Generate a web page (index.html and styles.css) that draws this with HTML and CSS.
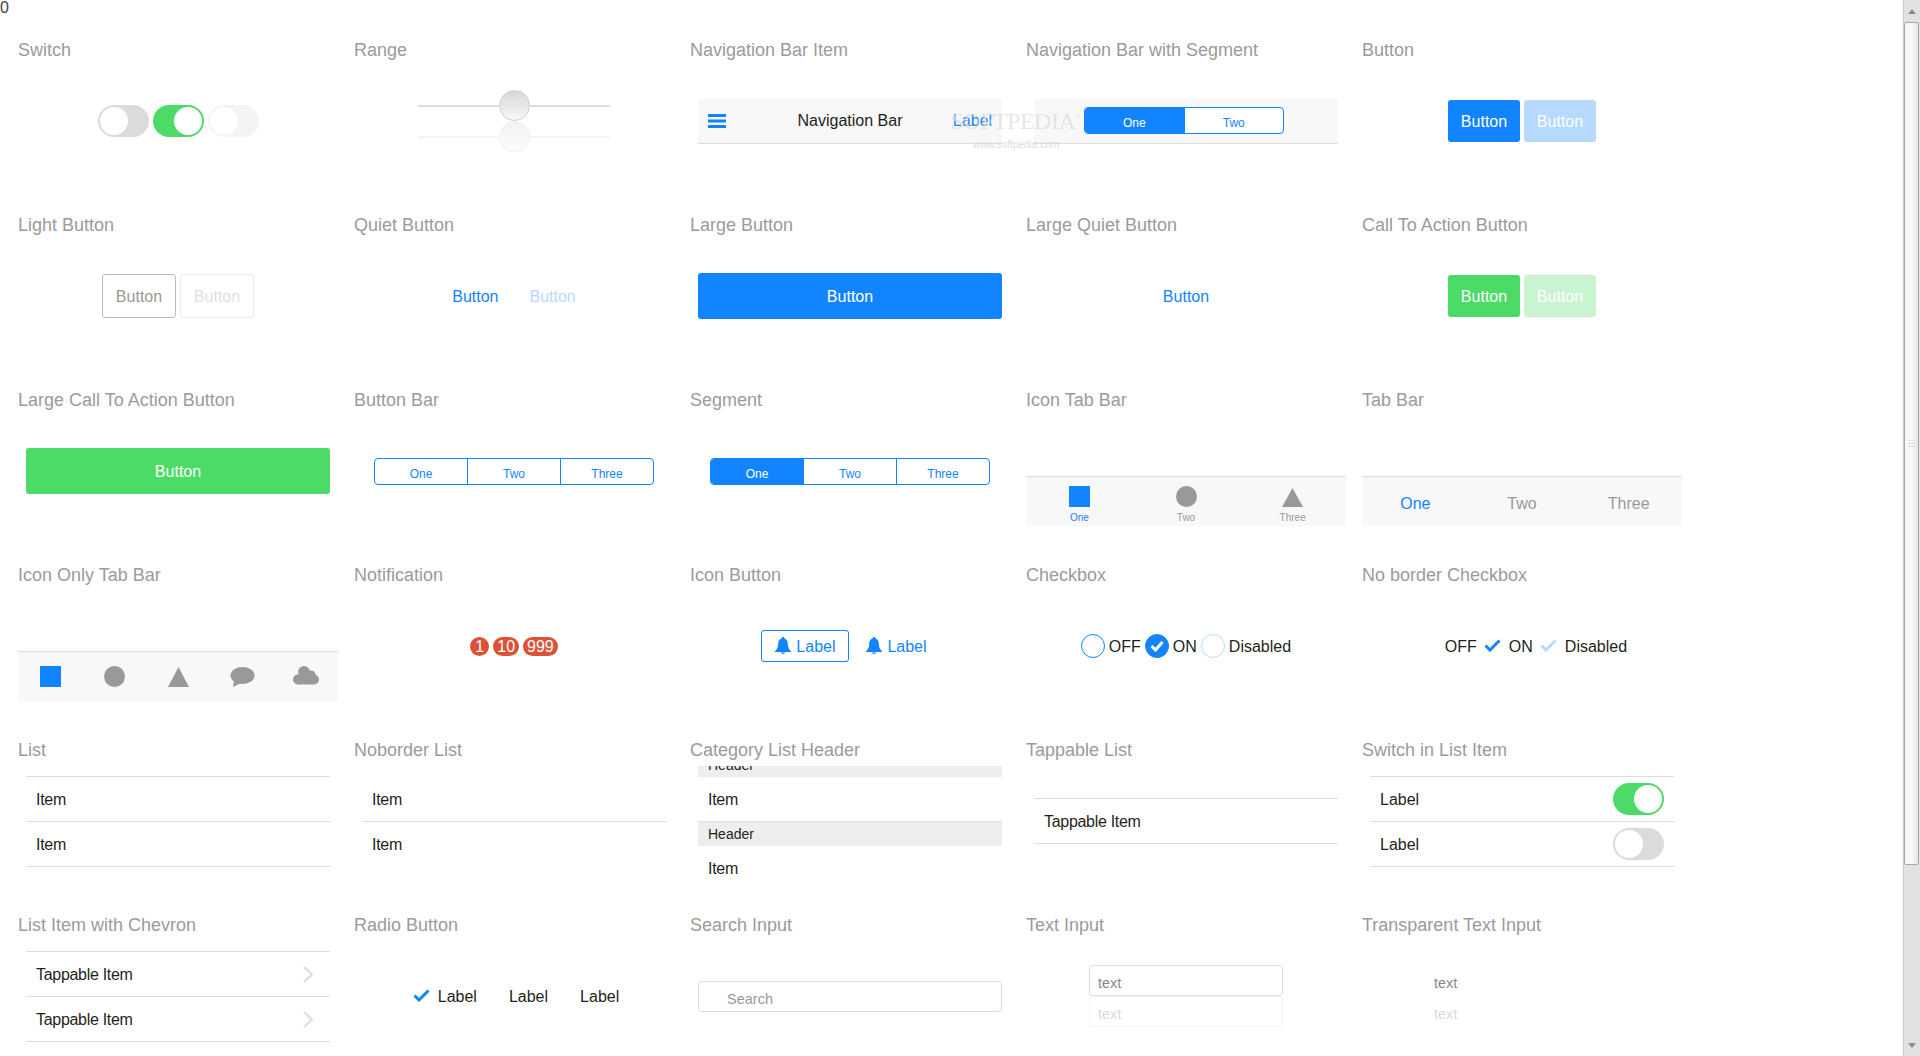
FILE: index.html
```html
<!DOCTYPE html>
<html lang="en">
<head>
    <meta charset="UTF-8">
    <title>CSS Components</title>
    <link rel="stylesheet" href="styles.css">
</head>
<body>

<div class="page">
    <div class="counter">0</div>

    <div class="grid">

        <!-- Row 1 -->
        <section class="cell">
            <h2 class="title">Switch</h2>
            <div class="demo gap-4">
                <span class="switch"><span class="knob"></span></span>
                <span class="switch on"><span class="knob"></span></span>
                <span class="switch faded"><span class="knob"></span></span>
            </div>
        </section>
        <section class="cell">
            <h2 class="title">Range</h2>
            <div class="demo stack">
                <input class="range" type="range" value="50">
                <input class="range faded" type="range" value="50">
            </div>
        </section>
        <section class="cell">
            <h2 class="title">Navigation Bar Item</h2>
            <div class="demo">
                <div class="navbar">
                    <div class="navbar-left">
                        <svg class="burger" width="18" height="14" viewBox="0 0 18 14"><path d="M0 0h18v3H0zM0 5.5h18v3H0zM0 11h18v3H0z"/></svg>
                    </div>
                    <div class="navbar-center">Navigation Bar</div>
                    <div class="navbar-right">Label</div>
                </div>
            </div>
        </section>
        <section class="cell">
            <h2 class="title">Navigation Bar with Segment</h2>
            <div class="demo">
                <div class="navbar navbar-segment">
                    <div class="segment segment-small">
                        <span class="seg active">One</span>
                        <span class="seg">Two</span>
                    </div>
                </div>
            </div>
        </section>
        <section class="cell">
            <h2 class="title">Button</h2>
            <div class="demo gap-4">
                <span class="btn">Button</span>
                <span class="btn faded">Button</span>
            </div>
        </section>

        <!-- Row 2 -->
        <section class="cell">
            <h2 class="title">Light Button</h2>
            <div class="demo gap-4">
                <span class="btn-light">Button</span>
                <span class="btn-light faded">Button</span>
            </div>
        </section>
        <section class="cell">
            <h2 class="title">Quiet Button</h2>
            <div class="demo gap-31">
                <span class="btn-quiet">Button</span>
                <span class="btn-quiet faded">Button</span>
            </div>
        </section>
        <section class="cell">
            <h2 class="title">Large Button</h2>
            <div class="demo">
                <span class="btn btn-large">Button</span>
            </div>
        </section>
        <section class="cell">
            <h2 class="title">Large Quiet Button</h2>
            <div class="demo">
                <span class="btn-quiet">Button</span>
            </div>
        </section>
        <section class="cell">
            <h2 class="title">Call To Action Button</h2>
            <div class="demo gap-4">
                <span class="btn btn-cta">Button</span>
                <span class="btn btn-cta faded">Button</span>
            </div>
        </section>

        <!-- Row 3 -->
        <section class="cell">
            <h2 class="title">Large Call To Action Button</h2>
            <div class="demo">
                <span class="btn btn-large btn-cta">Button</span>
            </div>
        </section>
        <section class="cell">
            <h2 class="title">Button Bar</h2>
            <div class="demo">
                <div class="segment">
                    <span class="seg">One</span>
                    <span class="seg">Two</span>
                    <span class="seg">Three</span>
                </div>
            </div>
        </section>
        <section class="cell">
            <h2 class="title">Segment</h2>
            <div class="demo">
                <div class="segment">
                    <span class="seg active">One</span>
                    <span class="seg">Two</span>
                    <span class="seg">Three</span>
                </div>
            </div>
        </section>
        <section class="cell">
            <h2 class="title">Icon Tab Bar</h2>
            <div class="demo demo-bottom">
                <div class="tabbar">
                    <div class="tab tab-icon active">
                        <svg width="21" height="21" viewBox="0 0 21 21"><rect width="21" height="21"/></svg>
                        <span class="tab-label">One</span>
                    </div>
                    <div class="tab tab-icon">
                        <svg width="21" height="21" viewBox="0 0 21 21"><circle cx="10.5" cy="10.5" r="10.5"/></svg>
                        <span class="tab-label">Two</span>
                    </div>
                    <div class="tab tab-icon">
                        <svg width="21" height="21" viewBox="0 0 21 21"><polygon points="10.5,2 21,21 0,21"/></svg>
                        <span class="tab-label">Three</span>
                    </div>
                </div>
            </div>
        </section>
        <section class="cell">
            <h2 class="title">Tab Bar</h2>
            <div class="demo demo-bottom">
                <div class="tabbar">
                    <div class="tab active">One</div>
                    <div class="tab">Two</div>
                    <div class="tab">Three</div>
                </div>
            </div>
        </section>

        <!-- Row 4 -->
        <section class="cell">
            <h2 class="title">Icon Only Tab Bar</h2>
            <div class="demo demo-bottom">
                <div class="tabbar">
                    <div class="tab tab-only active">
                        <svg width="21" height="21" viewBox="0 0 21 21"><rect width="21" height="21"/></svg>
                    </div>
                    <div class="tab tab-only">
                        <svg width="21" height="21" viewBox="0 0 21 21"><circle cx="10.5" cy="10.5" r="10.5"/></svg>
                    </div>
                    <div class="tab tab-only">
                        <svg width="21" height="21" viewBox="0 0 21 21"><polygon points="10.5,1 21,21 0,21"/></svg>
                    </div>
                    <div class="tab tab-only">
                        <svg width="25" height="21" viewBox="0 0 25 21"><ellipse cx="12.5" cy="9.5" rx="12" ry="8.5"/><path d="M4 14l-1 7 8-4z"/></svg>
                    </div>
                    <div class="tab tab-only">
                        <svg width="26" height="21" viewBox="0 0 26 21"><circle cx="11" cy="6" r="6"/><circle cx="18" cy="9" r="4.5"/><circle cx="5" cy="13.5" r="5"/><circle cx="21" cy="13.5" r="5"/><rect x="5" y="9" width="16" height="9.5"/></svg>
                    </div>
                </div>
            </div>
        </section>
        <section class="cell">
            <h2 class="title">Notification</h2>
            <div class="demo gap-4">
                <span class="badge">1</span>
                <span class="badge">10</span>
                <span class="badge">999</span>
            </div>
        </section>
        <section class="cell">
            <h2 class="title">Icon Button</h2>
            <div class="demo gap-17 icon-group">
                <span class="icon-btn bordered">
                    <svg class="bell" width="16" height="17" viewBox="0 0 16 17"><path d="M8 0C7 0 6.500.7 6.500 1.600 4.200 2.300 3.200 4.400 3.200 7c0 3.200-1 5.300-3.200 7.200V15h16v-.8C13.800 12.300 12.800 10.200 12.800 7c0-2.600-1-4.700-3.300-5.400C9.500.7 9 0 8 0zM5.800 15.600a2.200 1.400 0 0 0 4.400 0z"/></svg>
                    Label
                </span>
                <span class="icon-btn">
                    <svg class="bell" width="16" height="17" viewBox="0 0 16 17"><path d="M8 0C7 0 6.500.7 6.500 1.600 4.200 2.300 3.200 4.400 3.200 7c0 3.200-1 5.300-3.200 7.200V15h16v-.8C13.800 12.300 12.800 10.200 12.800 7c0-2.600-1-4.700-3.300-5.400C9.500.7 9 0 8 0zM5.800 15.600a2.200 1.400 0 0 0 4.400 0z"/></svg>
                    Label
                </span>
            </div>
        </section>
        <section class="cell">
            <h2 class="title">Checkbox</h2>
            <div class="demo gap-4">
                <label class="check"><span class="circle"></span>OFF</label>
                <label class="check">
                    <span class="circle checked"><svg width="14" height="12" viewBox="0 0 14 12"><polyline points="1.500,6 5.500,10 12.500,2"/></svg></span>ON
                </label>
                <label class="check"><span class="circle faded-ring"></span>Disabled</label>
            </div>
        </section>
        <section class="cell">
            <h2 class="title">No border Checkbox</h2>
            <div class="demo gap-7 tick-group">
                <label class="check gap-8">
                    <svg class="tick hidden" width="17" height="13" viewBox="0 0 17 13"><polyline points="1.500,6.500 6,11 15.500,1.500"/></svg>OFF
                </label>
                <label class="check gap-8">
                    <svg class="tick" width="17" height="13" viewBox="0 0 17 13"><polyline points="1.500,6.500 6,11 15.500,1.500"/></svg>ON
                </label>
                <label class="check gap-8">
                    <svg class="tick faded" width="17" height="13" viewBox="0 0 17 13"><polyline points="1.500,6.500 6,11 15.500,1.500"/></svg>Disabled
                </label>
            </div>
        </section>

        <!-- Row 5 -->
        <section class="cell">
            <h2 class="title">List</h2>
            <div class="demo">
                <ul class="list list-tight">
                    <li class="list-item">Item</li>
                    <li class="list-item">Item</li>
                </ul>
            </div>
        </section>
        <section class="cell">
            <h2 class="title">Noborder List</h2>
            <div class="demo">
                <ul class="list list-tight list-noborder">
                    <li class="list-item">Item</li>
                    <li class="list-item">Item</li>
                </ul>
            </div>
        </section>
        <section class="cell">
            <h2 class="title">Category List Header</h2>
            <div class="demo">
                <ul class="list list-tight list-category">
                    <li class="list-header">Header</li>
                    <li class="list-item">Item</li>
                    <li class="list-header">Header</li>
                    <li class="list-item">Item</li>
                </ul>
            </div>
        </section>
        <section class="cell">
            <h2 class="title">Tappable List</h2>
            <div class="demo">
                <ul class="list list-tight">
                    <li class="list-item">Tappable Item</li>
                </ul>
            </div>
        </section>
        <section class="cell">
            <h2 class="title">Switch in List Item</h2>
            <div class="demo">
                <ul class="list">
                    <li class="list-item spread">Label <span class="switch on"><span class="knob"></span></span></li>
                    <li class="list-item spread">Label <span class="switch"><span class="knob"></span></span></li>
                </ul>
            </div>
        </section>

        <!-- Row 6 -->
        <section class="cell">
            <h2 class="title">List Item with Chevron</h2>
            <div class="demo">
                <ul class="list list-tight">
                    <li class="list-item spread chevron-item">Tappable Item
                        <svg class="chevron" width="10" height="17" viewBox="0 0 10 17"><polyline points="1,1 9,8.500 1,16"/></svg>
                    </li>
                    <li class="list-item spread chevron-item">Tappable Item
                        <svg class="chevron" width="10" height="17" viewBox="0 0 10 17"><polyline points="1,1 9,8.500 1,16"/></svg>
                    </li>
                </ul>
            </div>
        </section>
        <section class="cell">
            <h2 class="title">Radio Button</h2>
            <div class="demo gap-7 radio-group">
                <label class="check gap-8">
                    <svg class="tick" width="17" height="13" viewBox="0 0 17 13"><polyline points="1.500,6.500 6,11 15.500,1.500"/></svg>Label
                </label>
                <label class="check gap-8">
                    <svg class="tick hidden" width="17" height="13" viewBox="0 0 17 13"><polyline points="1.500,6.500 6,11 15.500,1.500"/></svg>Label
                </label>
                <label class="check gap-8">
                    <svg class="tick hidden" width="17" height="13" viewBox="0 0 17 13"><polyline points="1.500,6.500 6,11 15.500,1.500"/></svg>Label
                </label>
            </div>
        </section>
        <section class="cell">
            <h2 class="title">Search Input</h2>
            <div class="demo">
                <input class="search" type="text" placeholder="Search">
            </div>
        </section>
        <section class="cell">
            <h2 class="title">Text Input</h2>
            <div class="demo stack">
                <input class="text-input" type="text" value="text">
                <input class="text-input faded" type="text" value="text">
            </div>
        </section>
        <section class="cell">
            <h2 class="title">Transparent Text Input</h2>
            <div class="demo stack">
                <input class="text-input transparent" type="text" value="text">
                <input class="text-input transparent faded" type="text" value="text">
            </div>
        </section>
    </div>

    <!-- watermark sits on top of the nav bars -->
    <div class="watermark">
        <div class="watermark-name">SOFTPEDIA<sup>™</sup></div>
        <div class="watermark-url">www.softpedia.com</div>
    </div>
</div>

<div class="scrollbar">
    <div class="scroll-btn"><span class="arrow-up"></span></div>
    <div class="scroll-thumb"><span class="grip"></span></div>
    <div class="scroll-track"></div>
    <div class="scroll-btn"><span class="arrow-down"></span></div>
</div>

</body>
</html>
```

FILE: styles.css
```css
* {
    box-sizing: border-box;
}
html, body {
    height: 100%;
}
body {
    margin: 0;
    display: flex;
    overflow: hidden;
    background-color: white;
    font-family: "Liberation Sans", Arial, sans-serif;
    font-size: 16px;
    color: #1f1f21;
}
.page {
    position: relative;
    flex: 1;
    height: 100%;
    overflow: hidden;
}
.counter {
    height: 16px;
    line-height: 16px;
    color: #444;
}

/* grid of samples */
.grid {
    display: grid;
    grid-template-columns: repeat(5, 320px);
    grid-auto-rows: 175px;
    column-gap: 16px;
    padding-left: 18px;
}
.cell {
    padding-top: 25px;
}
.title {
    margin: 0 0 7px;
    height: 18px;
    line-height: 18px;
    font-size: 18px;
    font-weight: normal;
    color: #9b9b9b;
}
.demo {
    display: flex;
    align-items: center;
    justify-content: center;
    height: 110px;
    overflow: hidden;
}
.demo-bottom {
    align-items: flex-end;
}
.stack {
    flex-direction: column;
}
.gap-4 { gap: 4px; }
.gap-7 { gap: 7px; }
.gap-17 { gap: 17px; }
.gap-31 { gap: 31px; }
.faded {
    opacity: 0.3;
}
.hidden {
    visibility: hidden;
}

/* switch */
.switch {
    display: inline-block;
    flex-shrink: 0;
    width: 51px;
    height: 32px;
    padding: 2px;
    border-radius: 16px;
    background-color: #dbdbdb;
}
.knob {
    display: block;
    width: 28px;
    height: 28px;
    border-radius: 50%;
    background-color: white;
}
.switch.on {
    background-color: #4cdb67;
}
.switch.on .knob {
    margin-left: 19px;
}

/* range */
.range {
    -webkit-appearance: none;
    appearance: none;
    display: block;
    width: 192px;
    height: 31px;
    margin: 0;
    background: transparent;
}
.range::-webkit-slider-runnable-track {
    height: 2px;
    background-color: #dddddd;
}
.range::-webkit-slider-thumb {
    -webkit-appearance: none;
    width: 31px;
    height: 31px;
    margin-top: -15px;
    border: 1px solid #d0d0d0;
    border-radius: 50%;
    background: linear-gradient(#d8d8d8, #f8f8f8);
}

/* navigation bar */
.navbar {
    display: grid;
    grid-template-columns: 1fr auto 1fr;
    align-items: center;
    width: 304px;
    height: 45px;
    border-bottom: 1px solid #dddddd;
    background-color: #f8f8f8;
}
.navbar-left {
    display: flex;
    padding-left: 10px;
}
.burger {
    fill: #1284ff;
}
.navbar-center {
    text-align: center;
}
.navbar-right {
    padding-right: 10px;
    text-align: right;
    color: #1284ff;
}
.navbar-segment {
    display: flex;
    justify-content: center;
    padding-right: 4px;
}

/* segment and button bar */
.segment {
    display: flex;
    width: 280px;
    height: 27px;
    border: 1px solid #1284ff;
    border-radius: 4px;
    overflow: hidden;
    background-color: white;
}
.segment-small {
    width: 200px;
}
.seg {
    flex: 1;
    padding-top: 3px;
    line-height: 24px;
    font-size: 12px;
    text-align: center;
    color: #1284ff;
    border-left: 1px solid #1284ff;
}
.seg:first-child {
    border-left: none;
}
.seg.active {
    color: white;
    background-color: #1284ff;
}

/* buttons */
.btn {
    display: block;
    width: 72px;
    height: 42px;
    line-height: 44px;
    border-radius: 3px;
    text-align: center;
    color: white;
    background-color: #1284ff;
}
.btn-cta {
    background-color: #4cdb67;
}
.btn-large {
    width: 304px;
    height: 46px;
    line-height: 48px;
}
.btn-light {
    display: block;
    width: 74px;
    height: 44px;
    line-height: 44px;
    border: 1px solid #bbbbbb;
    border-radius: 3px;
    text-align: center;
    color: #999999;
}
.btn-quiet {
    padding-top: 2px;
    color: #1284ff;
}

/* tab bars */
.tabbar {
    display: flex;
    width: 320px;
    height: 50px;
    border-top: 1px solid #dddddd;
    background-color: #f8f8f8;
    border-radius: 0 0 3px 3px;
}
.tab {
    flex: 1;
    display: flex;
    flex-direction: column;
    align-items: center;
    justify-content: center;
    color: #999999;
    fill: #999999;
    padding-top: 5px;
}
.tab.active {
    color: #1284ff;
    fill: #1284ff;
}
.tab-only {
    padding-top: 0;
}
.tab-icon {
    justify-content: flex-start;
    padding-top: 9px;
}
.tab-label {
    margin-top: 5px;
    height: 12px;
    line-height: 12px;
    font-size: 10px;
}

/* notification */
.badge {
    display: block;
    min-width: 19px;
    height: 19px;
    line-height: 19px;
    padding: 0 4px;
    border-radius: 10px;
    font-size: 16px;
    text-align: center;
    color: white;
    background-color: #dc5236;
}

/* icon button */
.icon-group {
    padding-right: 12px;
}
.icon-btn {
    display: flex;
    align-items: center;
    gap: 5px;
    padding-top: 2px;
    color: #1284ff;
}
.icon-btn.bordered {
    width: 88px;
    height: 32px;
    justify-content: center;
    border: 1px solid #1284ff;
    border-radius: 3px;
}
.bell {
    margin-top: -3px;
    fill: #1284ff;
}

/* checkbox and radio */
.check {
    display: flex;
    align-items: center;
    gap: 4px;
    padding-top: 2px;
}
.gap-8 {
    gap: 8px;
}
.tick-group {
    padding-left: 3px;
}
.circle {
    display: flex;
    align-items: center;
    justify-content: center;
    width: 24px;
    height: 24px;
    margin-top: -2px;
    border: 1px solid #1284ff;
    border-radius: 50%;
}
.circle.checked {
    background-color: #1284ff;
}
.circle.faded-ring {
    border-color: #b8daff;
}
.circle polyline {
    fill: none;
    stroke: white;
    stroke-width: 3;
}
.tick {
    margin-top: -3px;
}
.tick polyline {
    fill: none;
    stroke: #1284ff;
    stroke-width: 3;
}
.radio-group {
    padding-left: 4px;
}

/* lists */
.list {
    flex-shrink: 0;
    width: 304px;
    margin: 0;
    padding: 0;
    list-style: none;
    border-top: 1px solid #dddddd;
}
.list-tight .list-item {
    letter-spacing: -0.3px;
}
.list-item {
    display: flex;
    align-items: center;
    height: 45px;
    padding: 2px 10px 0;
    border-bottom: 1px solid #dddddd;
}
.spread {
    justify-content: space-between;
}
.list-item .switch {
    margin-top: -2px;
}
.chevron-item {
    padding-right: 17px;
}
.list-noborder {
    border-top-color: transparent;
}
.list-noborder .list-item:last-child {
    border-bottom: none;
}
.list-category {
    border-top: none;
}
.list-category .list-item {
    border-bottom: none;
    height: 44px;
}
.list-header {
    height: 25px;
    line-height: 24px;
    padding-left: 10px;
    font-size: 14px;
    border-top: 1px solid #dddddd;
    background-color: #eeeeee;
}
.chevron polyline {
    fill: none;
    stroke: #dddddd;
    stroke-width: 2;
}

/* inputs */
.search {
    width: 304px;
    height: 31px;
    padding: 5px 0 0 28px;
    border: 1px solid #dddddd;
    border-radius: 3px;
    font-family: inherit;
    font-size: 14.5px;
    outline: none;
}
.search::placeholder {
    color: #999999;
}
.text-input {
    display: block;
    width: 194px;
    height: 31px;
    padding: 5px 8px 0;
    border: 1px solid #dddddd;
    border-radius: 3px;
    font-family: inherit;
    font-size: 14.5px;
    color: #888888;
    background-color: white;
    outline: none;
}
.text-input.transparent {
    border-color: transparent;
    background-color: transparent;
}

/* watermark */
.watermark {
    position: absolute;
    left: 950px;
    top: 108px;
    width: 132px;
    text-align: center;
    pointer-events: none;
}
.watermark-name {
    height: 26px;
    line-height: 26px;
    font-family: "Liberation Serif", "Times New Roman", serif;
    font-size: 24px;
    letter-spacing: -0.5px;
    white-space: nowrap;
    color: rgba(190, 190, 190, 0.4);
    text-shadow: 1px 0 0 rgba(255, 255, 255, 0.5);
}
.watermark-name sup {
    font-size: 7px;
    vertical-align: 10px;
    line-height: 0;
}
.watermark-url {
    margin-top: 4px;
    line-height: 14px;
    font-size: 10px;
    color: #dddddd;
}

/* window scrollbar */
.scrollbar {
    display: flex;
    flex-direction: column;
    flex-shrink: 0;
    width: 17px;
    height: 100%;
    border-left: 1px solid #c8c8c8;
    background-color: #e2e2e2;
}
.scroll-btn {
    display: flex;
    align-items: center;
    justify-content: center;
    height: 22px;
}
.arrow-up {
    border: 4px solid transparent;
    border-top: none;
    border-bottom: 5px solid #8a8a8a;
}
.arrow-down {
    border: 4px solid transparent;
    border-bottom: none;
    border-top: 5px solid #8a8a8a;
}
.scroll-thumb {
    display: flex;
    align-items: center;
    justify-content: center;
    height: 843px;
    margin: 0 1px 0 0;
    border: 1px solid #a8a8a8;
    border-radius: 2px;
    background: linear-gradient(to right, #f6f6f6, #fafafa 50%, #e4e4e4);
}
.grip {
    width: 7px;
    height: 7px;
    border-top: 1px solid #dcdcdc;
    border-bottom: 1px solid #dcdcdc;
    background: linear-gradient(#dcdcdc, #dcdcdc) center / 100% 1px no-repeat;
}
.scroll-track {
    flex: 1;
}
```
